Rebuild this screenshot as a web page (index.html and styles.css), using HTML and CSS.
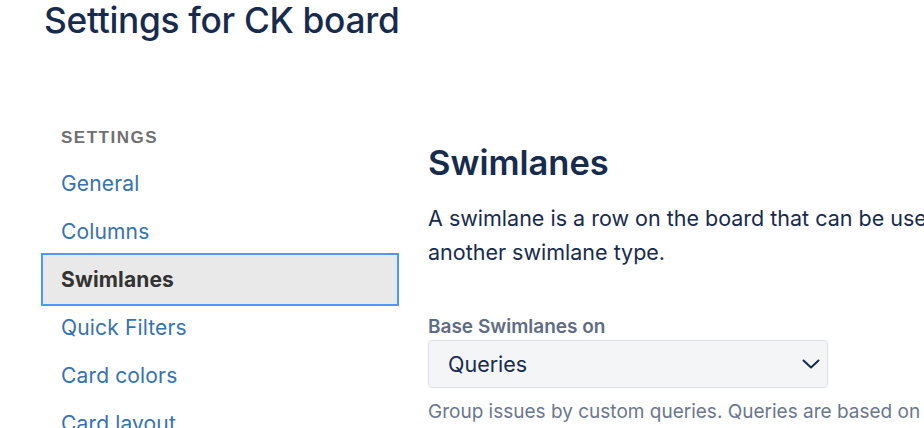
FILE: index.html
```html
<!DOCTYPE html>
<html>
<head>
<meta charset="utf-8">
<link rel="stylesheet" href="styles.css">
</head>
<body>
<div class="page">
  <h1 class="title">Settings for CK board</h1>
  <div class="layout">
    <nav class="sidebar">
      <div class="nav-heading">Settings</div>
      <a class="nav-item">General</a>
      <a class="nav-item">Columns</a>
      <a class="nav-item active">Swimlanes</a>
      <a class="nav-item">Quick Filters</a>
      <a class="nav-item">Card colors</a>
      <a class="nav-item">Card layout</a>
    </nav>
    <main class="content">
      <h2 class="section-title">Swimlanes</h2>
      <p class="desc">A swimlane is a row on the board that can be used to group issues. Choose a query or<br>another swimlane type.</p>
      <div class="field">
        <label class="field-label">Base Swimlanes on</label>
        <div class="select">
          <span class="select-value">Queries</span>
          <svg class="chevron" width="18" height="10" viewBox="0 0 18 10"><path d="M1.5 1.5 L9 8.5 L16.5 1.5" fill="none" stroke="#172b4d" stroke-width="2" stroke-linecap="round" stroke-linejoin="round"/></svg>
        </div>
        <div class="help">Group issues by custom queries. Queries are based on JQL.</div>
      </div>
    </main>
  </div>
</div>
</body>
</html>
```

FILE: styles.css
```css
html, body {
  margin: 0;
  padding: 0;
  background: #fff;
  overflow: hidden;
}
body {
  font-family: Inter, "Liberation Sans", Arial, sans-serif;
  width: 924px;
  height: 428px;
}
.page {
  padding: 0 0 0 44px;
}
.title {
  margin: 0;
  padding-top: 1px;
  font-size: 35.3px;
  font-weight: 500;
  line-height: 40px;
  color: #172b4d;
  letter-spacing: -0.3px;
  white-space: nowrap;
}
.layout {
  display: flex;
  margin-top: 85px;
}
.sidebar {
  flex: 0 0 358px;
  width: 358px;
  margin-left: -3px;
  display: flex;
  flex-direction: column;
}
.nav-heading {
  font-family: "Liberation Sans", Arial, sans-serif;
  font-size: 17px;
  font-weight: 700;
  text-transform: uppercase;
  color: #707070;
  letter-spacing: 1.5px;
  line-height: 24px;
  padding: 0 0 10px 20px;
}
.nav-item {
  display: block;
  box-sizing: border-box;
  height: 48px;
  line-height: 48px;
  padding-left: 20px;
  font-size: 21px;
  letter-spacing: 0.15px;
  color: #3572b0;
  white-space: nowrap;
}
.nav-item.active {
  height: 53px;
  line-height: 49px;
  margin: -3px 0 -2px 0;
  padding-left: 18px;
  border: 2px solid #4c9aff;
  background: #e9e9e9;
  color: #333;
  font-weight: 700;
}
.content {
  flex: 0 0 auto;
  margin-left: 29px;
  padding-top: 17px;
  white-space: nowrap;
}
.section-title {
  margin: 0;
  font-size: 34.5px;
  font-weight: 600;
  line-height: 40px;
  color: #172b4d;
}
.desc {
  margin: 18px 0 0 0;
  font-size: 21.5px;
  line-height: 34px;
  color: #172b4d;
}
.field {
  margin-top: 47px;
}
.field-label {
  display: block;
  font-size: 19px;
  font-weight: 600;
  line-height: 22px;
  color: #5e6c84;
}
.select {
  box-sizing: border-box;
  width: 400px;
  height: 48px;
  margin-top: 2px;
  border: 1px solid #dfe1e6;
  border-radius: 4px;
  background: #f4f5f7;
  display: flex;
  align-items: center;
  justify-content: space-between;
  padding: 0 7px 0 19px;
}
.select-value {
  font-size: 21.5px;
  color: #172b4d;
}
.help {
  margin-top: 12px;
  font-size: 19px;
  line-height: 24px;
  color: #6b778c;
}
```
